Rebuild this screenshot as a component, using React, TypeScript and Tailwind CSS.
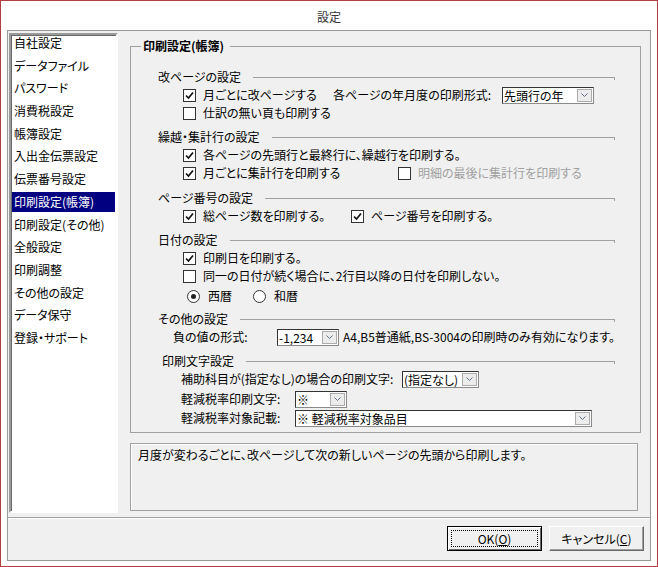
import React from 'react';

const menuItems = [
  '自社設定',
  'データファイル',
  'パスワード',
  '消費税設定',
  '帳簿設定',
  '入出金伝票設定',
  '伝票番号設定',
  '印刷設定(帳簿)',
  '印刷設定(その他)',
  '全般設定',
  '印刷調整',
  'その他の設定',
  'データ保守',
  '登録・サポート',
];

const CheckBox = ({ checked, disabled, label }: { checked?: boolean; disabled?: boolean; label: string }) => (
  <div className="flex items-center gap-[7px] whitespace-nowrap">
    <span className="flex h-[13px] w-[13px] shrink-0 items-center justify-center border border-[#333] bg-white">
      {checked && (
        <svg width="9" height="9" viewBox="0 0 9 9">
          <path d="M1 4.5 L3.5 7 L8 1.5" fill="none" stroke="#111" strokeWidth="1.7" />
        </svg>
      )}
    </span>
    <span className={disabled ? 'text-[#a0a0a0]' : ''}>{label}</span>
  </div>
);

const Radio = ({ checked, label }: { checked?: boolean; label: string }) => (
  <div className="flex items-center gap-[8px] whitespace-nowrap">
    <span className="flex h-[13px] w-[13px] shrink-0 items-center justify-center rounded-full border border-[#333] bg-white">
      {checked && <span className="h-[5px] w-[5px] rounded-full bg-[#222]" />}
    </span>
    <span>{label}</span>
  </div>
);

const Combo = ({ value, className }: { value: string; className: string }) => (
  <div
    className={`flex h-[17px] shrink-0 border border-t-[#333] border-l-[#333] border-r-[#8a8a8a] border-b-[#8a8a8a] bg-white ${className}`}
  >
    <span className="flex-1 overflow-hidden whitespace-nowrap pl-[1px] leading-[15px]">{value}</span>
    <span className="m-[1px] flex w-[15px] shrink-0 items-center justify-center border border-[#acacac] bg-[#ececec]">
      <svg width="7" height="4" viewBox="0 0 7 4">
        <path d="M0.5 0.5 L3.5 3.5 L6.5 0.5" fill="none" stroke="#5f6f88" strokeWidth="1" />
      </svg>
    </span>
  </div>
);

const SectionHead = ({ title, className = '' }: { title: string; className?: string }) => (
  <div className={`flex h-[18px] items-center gap-[12px] ${className}`}>
    <span className="whitespace-nowrap">{title}</span>
    <span className="mt-[3px] h-[3px] flex-1 border-t border-r border-[#a0a0a0]" />
  </div>
);

export default function App() {
  return (
    <div className="flex h-[567px] w-[658px] flex-col border border-[#b0403d] bg-white font-['Noto_Sans_CJK_JP','Noto_Sans',sans-serif] text-[12px] leading-[18px] text-black [font-feature-settings:'palt']">
      {/* Title bar */}
      <div className="flex h-[29px] shrink-0 items-center justify-center pt-[3px] text-[#333]">設定</div>

      {/* Client */}
      <div className="mx-[6px] mb-[5px] flex flex-1 flex-col border border-[#989898] bg-[#f0f0f0]">
        <div className="flex h-[486px] shrink-0">
          {/* Menu list */}
          <div className="ml-[1px] mt-[2px] flex h-[480px] w-[109px] shrink-0 flex-col overflow-hidden border-2 border-t-[#9a9a9a] border-l-[#9a9a9a] border-r-white border-b-white bg-white shadow-[inset_1px_1px_0_#696969]">
            <div className="-mt-[2px] flex flex-col">
              {menuItems.map((item) => (
                <div key={item} className="h-[22.7px] shrink-0 px-[1px]">
                  <div
                    className={`h-[20px] whitespace-nowrap pl-[2px] leading-[20px] ${
                      item === '印刷設定(帳簿)' ? 'bg-[#000080] text-white' : ''
                    }`}
                  >
                    {item}
                  </div>
                </div>
              ))}
            </div>
          </div>

          {/* Right column */}
          <div className="ml-[12px] flex w-[508px] flex-col pt-[7px]">
            <fieldset className="h-[395px] shrink-0 border border-[#a0a0a0]">
              <legend className="ml-[10px] pl-[2px] pr-[6px] font-bold leading-[16px]">印刷設定(帳簿)</legend>
              <div className="flex flex-col pl-[27px] pr-[25px] pt-[14px]">
                {/* 改ページ */}
                <SectionHead title="改ページの設定" />
                <div className="flex h-[18px] items-center pl-[25px]">
                  <div className="w-[150px] shrink-0">
                    <CheckBox checked label="月ごとに改ページする" />
                  </div>
                  <span className="w-[169px] shrink-0 whitespace-nowrap">各ページの年月度の印刷形式:</span>
                  <Combo value="先頭行の年" className="w-[92px]" />
                </div>
                <div className="flex h-[18px] items-center pl-[25px]">
                  <CheckBox label="仕訳の無い頁も印刷する" />
                </div>

                {/* 繰越・集計行 */}
                <SectionHead title="繰越・集計行の設定" className="mt-[6px]" />
                <div className="flex h-[18px] items-center pl-[25px]">
                  <CheckBox checked label="各ページの先頭行と最終行に、繰越行を印刷する。" />
                </div>
                <div className="flex h-[18px] items-center pl-[25px]">
                  <div className="w-[215px] shrink-0">
                    <CheckBox checked label="月ごとに集計行を印刷する" />
                  </div>
                  <CheckBox disabled label="明細の最後に集計行を印刷する" />
                </div>

                {/* ページ番号 */}
                <SectionHead title="ページ番号の設定" className="mt-[7px]" />
                <div className="flex h-[18px] items-center pl-[25px]">
                  <div className="w-[168px] shrink-0">
                    <CheckBox checked label="総ページ数を印刷する。" />
                  </div>
                  <CheckBox checked label="ページ番号を印刷する。" />
                </div>

                {/* 日付 */}
                <SectionHead title="日付の設定" className="mt-[6px]" />
                <div className="flex h-[18px] items-center pl-[25px]">
                  <CheckBox checked label="印刷日を印刷する。" />
                </div>
                <div className="flex h-[18px] items-center pl-[25px]">
                  <CheckBox label="同一の日付が続く場合に、2行目以降の日付を印刷しない。" />
                </div>
                <div className="mt-[2px] flex h-[18px] items-center pl-[29px]">
                  <div className="w-[66px] shrink-0">
                    <Radio checked label="西暦" />
                  </div>
                  <Radio label="和暦" />
                </div>

                {/* その他 */}
                <SectionHead title="その他の設定" className="mt-[5px]" />
                <div className="flex h-[18px] items-center pl-[15px]">
                  <span className="w-[104px] shrink-0 whitespace-nowrap">負の値の形式:</span>
                  <Combo value="-1,234" className="w-[62px]" />
                  <span className="ml-[4px] whitespace-nowrap">A4,B5普通紙,BS-3004の印刷時のみ有効になります。</span>
                </div>

                {/* 印刷文字 */}
                <SectionHead title="印刷文字設定" className="ml-[4px] mt-[6px]" />
                <div className="flex h-[18px] items-center pl-[23px]">
                  <span className="w-[221px] shrink-0 whitespace-nowrap">補助科目が(指定なし)の場合の印刷文字:</span>
                  <Combo value="(指定なし)" className="w-[77px]" />
                </div>
                <div className="mt-[2px] flex h-[18px] items-center pl-[23px]">
                  <span className="w-[114px] shrink-0 whitespace-nowrap">軽減税率印刷文字:</span>
                  <Combo value="※" className="w-[52px]" />
                </div>
                <div className="mt-[1px] flex h-[18px] items-center pl-[23px]">
                  <span className="w-[114px] shrink-0 whitespace-nowrap">軽減税率対象記載:</span>
                  <Combo value="※ 軽減税率対象品目" className="w-[297px]" />
                </div>
              </div>
            </fieldset>

            {/* Description */}
            <div className="mt-[10px] h-[68px] shrink-0 border border-[#a0a0a0] pl-[7px] pt-[2px] shadow-[inset_1px_1px_0_#fff]">
              月度が変わるごとに、改ページして次の新しいページの先頭から印刷します。
            </div>
          </div>
        </div>

        <div className="h-[2px] shrink-0 border-t border-[#a0a0a0] bg-white" />

        {/* Buttons */}
        <div className="flex justify-end gap-[7px] pr-[6px] pt-[7px]">
          <button className="flex h-[25px] w-[95px] border border-black bg-[#f0f0f0] p-[3px] shadow-[inset_1px_1px_0_#fff,inset_-1px_-1px_0_#696969]">
            <span className="flex flex-1 items-center justify-center border border-dotted border-black leading-[16px]">
              OK(<span className="underline">O</span>)
            </span>
          </button>
          <button className="flex h-[25px] w-[95px] items-center justify-center border border-t-white border-l-white border-r-[#696969] border-b-[#696969] bg-[#f0f0f0] shadow-[inset_-1px_-1px_0_#a0a0a0]">
            キャンセル(<span className="underline">C</span>)
          </button>
        </div>
      </div>
    </div>
  );
}
